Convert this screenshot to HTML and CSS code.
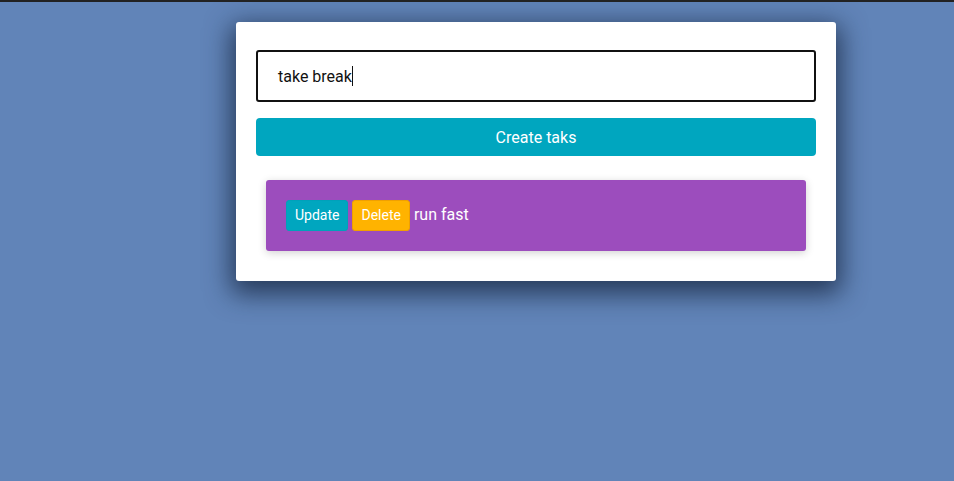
FILE: index.html
```html
<!DOCTYPE html>
<html>
<head>
<meta charset="utf-8">
<link rel="stylesheet" href="styles.css">
</head>
<body>
<div class="page">
  <div class="card">
    <div class="input">take break<span class="caret"></span></div>
    <button class="create">Create taks</button>
    <ul class="tasks">
      <li class="task">
        <button class="btn update">Update</button>
        <button class="btn delete">Delete</button>
        <span class="task-text">run fast</span>
      </li>
    </ul>
  </div>
</div>
</body>
</html>
```
FILE: styles.css
```css
html, body {
  margin: 0;
  padding: 0;
  height: 100%;
}
body {
  background: #6184b8;
  border-top: 2px solid #222;
  box-sizing: border-box;
  font-family: Roboto, "Liberation Sans", sans-serif;
  overflow: hidden;
}
.page {
  padding: 20px 0 0 236px;
}
.card {
  width: 600px;
  box-sizing: border-box;
  background: #fff;
  border-radius: 3px;
  padding: 28px 20px 30px;
  box-shadow: 0 8px 26px 5px rgba(20, 35, 60, 0.75);
}
.input {
  height: 52px;
  box-sizing: border-box;
  border: 2px solid #111;
  border-radius: 3px;
  padding: 0 20px;
  display: flex;
  align-items: center;
  font-size: 16px;
  color: #111;
}
.caret {
  display: inline-block;
  width: 1px;
  height: 20px;
  background: #111;
}
.create {
  display: block;
  width: 100%;
  height: 38px;
  margin-top: 16px;
  border: none;
  border-radius: 4px;
  background: #00a6bf;
  color: #fff;
  font-family: inherit;
  font-size: 16px;
}
.tasks {
  list-style: none;
  margin: 24px 10px 0;
  padding: 0;
}
.task {
  background: #9c4dbd;
  border-radius: 3px;
  padding: 20px;
  display: flex;
  align-items: center;
  gap: 4px;
  box-shadow: 0 2px 8px rgba(0, 0, 0, 0.18);
}
.btn {
  height: 31px;
  border-radius: 3px;
  font-family: inherit;
  font-size: 14px;
  color: #fff;
  padding: 0 8px 1px;
}
.update {
  background: #00a6bf;
  border: 1px solid #00a1ba;
}
.delete {
  background: #ffb300;
  border: 1px solid #f0a000;
}
.task-text {
  color: #fff;
  font-size: 16px;
  padding-bottom: 2px;
}
```
